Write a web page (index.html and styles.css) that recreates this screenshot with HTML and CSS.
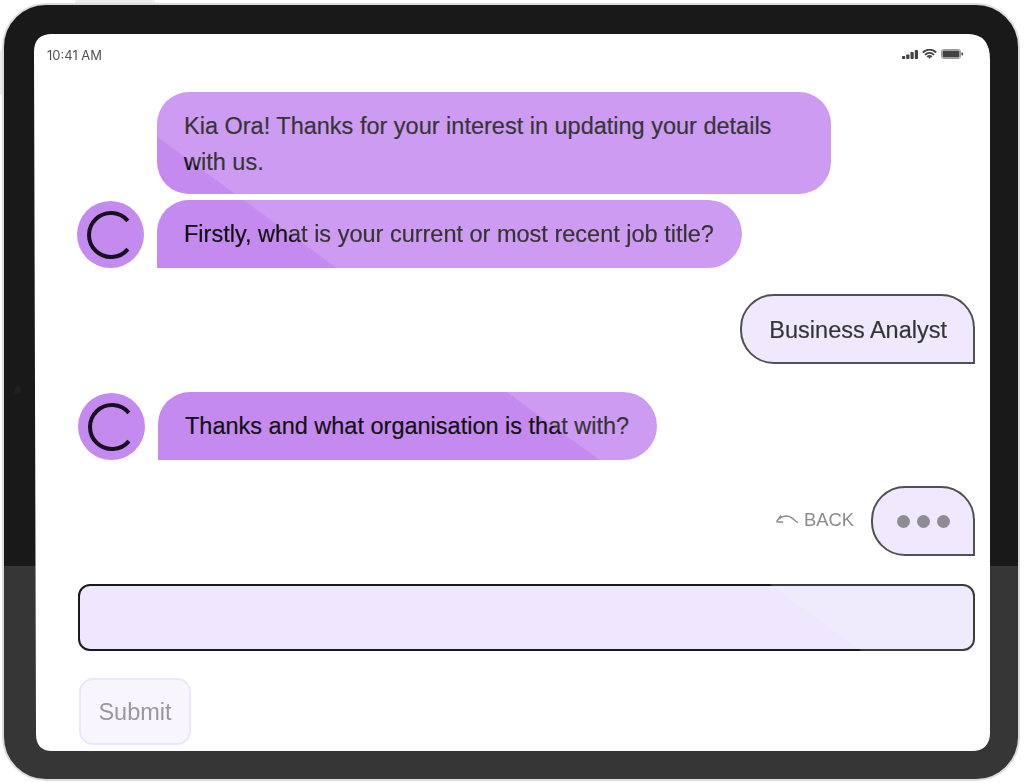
FILE: index.html
```html
<!DOCTYPE html>
<html lang="en">
<head>
  <meta charset="UTF-8">
  <title>Chat</title>
  <link rel="stylesheet" href="styles.css">
</head>
<body>
  <div class="side-btn side-top"></div>
  <div class="side-btn side-left"></div>
  <div class="device">
    <div class="camera"></div>
    <div class="screen">
      <div class="status-bar">
        <span class="time">10:41 AM</span>
        <div class="status-icons">
          <svg width="16" height="9" viewBox="0 0 16 9"><rect x="0" y="6" width="3.200" height="3" rx=".8"/><rect x="4.200" y="4.500" width="3.200" height="4.500" rx=".8"/><rect x="8.500" y="2" width="3.200" height="7" rx=".8"/><rect x="12.800" y="0" width="3.200" height="9" rx=".8"/></svg>
          <svg width="15" height="10" viewBox="0 0 15 10"><path d="M.8 3.500a9.400 9.400 0 0 1 13.400 0M3 5.800a6.200 6.200 0 0 1 9 0M5.200 7.900a3.100 3.100 0 0 1 4.600 0" fill="none" stroke="#222" stroke-width="1.800"/><path d="M6.200 8.600l1.300-.9 1.300.9-1.300 1.400z"/></svg>
          <svg width="22" height="10" viewBox="0 0 22 10"><rect x=".5" y=".5" width="19" height="9" rx="2" fill="none" stroke="#888"/><rect x="1.500" y="1.500" width="17" height="7" rx="1"/><rect x="20.500" y="3.500" width="1.500" height="3" rx=".7"/></svg>
        </div>
      </div>

      <div class="chat">
        <div class="bubble bot round first">Kia Ora! Thanks for your interest in updating your details with us.</div>
        <div class="row">
          <div class="avatar">
            <svg width="50" height="50" viewBox="0 0 50 50"><path d="M41.900 10.900a22 22 0 1 0 0 28.200" fill="none" stroke="#17101f" stroke-width="4"/></svg>
          </div>
          <div class="bubble bot">Firstly, what is your current or most recent job title?</div>
        </div>
        <div class="row right user-row">
          <div class="bubble user">Business Analyst</div>
        </div>
        <div class="row second">
          <div class="avatar">
            <svg width="50" height="50" viewBox="0 0 50 50"><path d="M41.900 10.900a22 22 0 1 0 0 28.200" fill="none" stroke="#17101f" stroke-width="4"/></svg>
          </div>
          <div class="bubble bot">Thanks and what organisation is that with?</div>
        </div>
        <div class="row right typing-row">
          <a class="back" href="#">
            <svg width="24" height="14" viewBox="0 0 24 14"><path d="M23 9.600C19 8 17 3 12 3 9 3 6 4 3 6.500M1.500 8.700L6 2.500M1.500 8.700L8 9.300" fill="none" stroke="#777" stroke-width="1.400"/></svg>
            BACK
          </a>
          <div class="bubble user typing"><i></i><i></i><i></i></div>
        </div>
        <div class="answer"></div>
        <button class="submit">Submit</button>
      </div>
      <div class="glare"></div>
    </div>
  </div>
</body>
</html>
```

FILE: styles.css
```css
html, body {
  margin: 0;
  padding: 0;
  background: #fff;
}
body {
  width: 1024px;
  height: 783px;
  overflow: hidden;
  position: relative;
  font-family: "Liberation Sans", Arial, sans-serif;
}
.device {
  margin: 3px 2px 2px 2px;
  width: 1018px;
  height: 778px;
  box-sizing: border-box;
  padding: 29px 28px 28px 30px;
  border: 2px solid #dcdcdc;
  border-radius: 44px;
  background: linear-gradient(#191919 561px, #363636 561px);
  position: relative;
  filter: blur(0.35px);
}
.side-btn {
  position: absolute;
  background: #ececec;
}
.side-top {
  left: 75px;
  top: 0;
  width: 80px;
  height: 3px;
  border-radius: 2px 2px 0 0;
}
.side-left {
  left: 0;
  top: 50px;
  width: 3px;
  height: 45px;
  border-radius: 2px 0 0 2px;
}
.camera {
  position: absolute;
  left: 10px;
  top: 382px;
  width: 7px;
  height: 7px;
  border-radius: 50%;
  background: #212121;
}
.screen {
  height: 717px;
  background: #fff;
  position: relative;
  overflow: hidden;
  clip-path: path("M18 0H934Q956 0 956 26V700Q955 717 938 717H18Q2 717 2 700L0 18Q0 0 18 0Z");
}
.status-bar {
  height: 40px;
  display: flex;
  align-items: center;
  justify-content: space-between;
  padding: 2px 27px 0 13px;
  box-sizing: border-box;
  color: #333;
}
.time {
  font-family: Inter, sans-serif;
  font-size: 13px;
}
.status-icons {
  display: flex;
  align-items: center;
  gap: 4px;
  margin-top: -2px;
}
.status-icons svg {
  display: block;
  fill: #222;
}
.chat {
  padding: 18px 15px 0 43px;
  display: flex;
  flex-direction: column;
}
.row {
  display: flex;
  gap: 13px;
  align-items: flex-end;
}
.right {
  justify-content: flex-end;
}
.bubble {
  box-sizing: border-box;
  font-size: 23.500px;
  line-height: 36px;
  -webkit-text-stroke: 0.2px;
}
.bot {
  background: #c58af0;
  color: #111;
  padding: 16px 28px 16px 27px;
  border-radius: 32px 34px 34px 0;
}
.first {
  margin: 0 0 6px 80px;
  width: 674px;
  height: 102px;
  padding: 16px 40px 14px 27px;
}
.round {
  border-radius: 32px;
}
.user {
  background: #eee6fe;
  color: #111;
  border: 2px solid #333;
  border-radius: 34px 34px 0 34px;
  padding: 16px 26px 14px 27px;
  height: 70px;
}
.user-row {
  margin-top: 26px;
}
.second {
  margin-top: 28px;
  padding-left: 1px;
}
.typing-row {
  margin-top: 26px;
  align-items: center;
  gap: 17px;
}
.back {
  display: flex;
  align-items: center;
  gap: 5px;
  color: #777;
  font-size: 18.400px;
  text-decoration: none;
  margin-bottom: 2px;
}
.typing {
  width: 104px;
  display: flex;
  align-items: center;
  justify-content: center;
  gap: 7px;
  padding: 0;
}
.typing i {
  width: 13px;
  height: 13px;
  border-radius: 50%;
  background: #7d7884;
}
.avatar {
  width: 67px;
  height: 67px;
  flex: none;
  border-radius: 50%;
  background: #c58af0;
  display: flex;
  align-items: center;
  justify-content: center;
}
.avatar svg {
  display: block;
}
.answer {
  margin-top: 28px;
  height: 67px;
  margin-left: 1px;
  box-sizing: border-box;
  background: #eee7fd;
  border: 2px solid #1a1a1a;
  border-radius: 12px;
}
.submit {
  margin: 27px 0 0 2px;
  width: 112px;
  height: 67px;
  background: #f8f5fe;
  border: 2px solid #ece6fb;
  border-radius: 14px;
  color: #999;
  font: 23.500px "Liberation Sans", Arial, sans-serif;
  padding: 2px 0 0;
  align-self: flex-start;
}
.glare {
  position: absolute;
  inset: 0;
  background: rgba(255, 255, 255, 0.15);
  clip-path: polygon(0 13px, 100% 711px, 100% 0, 0 0);
}
```
